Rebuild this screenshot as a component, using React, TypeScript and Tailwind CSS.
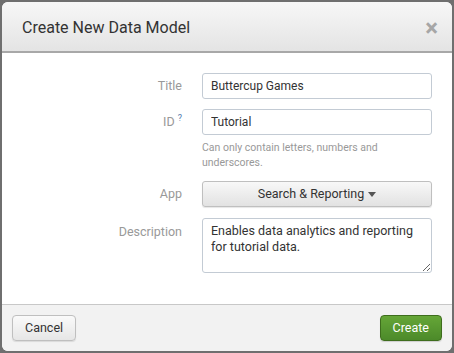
import React from 'react';

const labelClasses = "w-[200px] shrink-0 pr-[20px] text-right text-[12.5px] text-[#999]";
const inputClasses = "h-[26px] w-[230px] rounded-[3px] border border-[#c3cbd4] bg-white px-[8px] text-[12px] text-[#333] outline-none";

const App: React.FC = () => {
  return (
    <div className="h-[353px] w-[454px] bg-[#6f6f6f] p-[2px] font-['Roboto',sans-serif]">
      <div className="flex h-[349px] w-[450px] flex-col overflow-hidden rounded-[6px] bg-white">
        <div className="flex h-[51px] shrink-0 items-center justify-between border-b-2 border-[#a8a8a8] bg-gradient-to-b from-[#f7f7f7] to-[#e4e4e4] pl-[20px] pr-[14px] pt-[3px]">
          <h3 className="text-[16px] text-[#333]">Create New Data Model</h3>
          <span className="text-[24px] font-bold leading-none text-[#a6a6a6]">×</span>
        </div>

        <div className="flex-1 pt-[20px]">
          <div className="flex items-center">
            <label className={labelClasses}>Title</label>
            <input className={inputClasses} defaultValue="Buttercup Games" />
          </div>
          <div className="mt-[10px] flex items-center">
            <label className={labelClasses}>
              ID <sup className="text-[9px] text-[#5379af]">?</sup>
            </label>
            <input className={inputClasses} defaultValue="Tutorial" />
          </div>
          <p className="ml-[200px] mt-[5px] w-[200px] text-[10.5px] leading-[15px] text-[#999]">
            Can only contain letters, numbers and underscores.
          </p>
          <div className="mt-[11px] flex items-center">
            <label className={labelClasses}>App</label>
            <button className="flex h-[26px] w-[230px] items-center justify-center gap-1 rounded-[3px] border border-[#bfbfbf] bg-gradient-to-b from-[#f8f8f8] to-[#e2e2e2] text-[12.5px] text-[#333] shadow-[0_1px_1px_rgba(0,0,0,0.1)]">
              Search &amp; Reporting
              <svg width="8" height="5" viewBox="0 0 8 5"><path d="M0 0h8L4 5z" fill="#555" /></svg>
            </button>
          </div>
          <div className="mt-[11px] flex items-start">
            <label className={`${labelClasses} pt-[5px]`}>Description</label>
            <textarea
              className="h-[55px] w-[230px] resize rounded-[3px] border border-[#c3cbd4] bg-white py-[4px] pl-[8px] pr-[16px] text-[12.5px] leading-[16px] text-[#333] outline-none"
              defaultValue="Enables data analytics and reporting for tutorial data."
            />
          </div>
        </div>

        <div className="flex h-[47px] shrink-0 items-center justify-between border-t border-[#c8c8c8] bg-[#f2f2f2] px-[10px]">
          <button className="h-[26px] rounded-[4px] border border-[#bfbfbf] bg-gradient-to-b from-[#fafafa] to-[#e6e6e6] px-[12px] text-[12.5px] text-[#333] shadow-[0_1px_1px_rgba(0,0,0,0.1)]">
            Cancel
          </button>
          <button className="h-[26px] rounded-[4px] border border-[#3e6d1d] bg-gradient-to-b from-[#65a637] to-[#4c8a2a] px-[12px] text-[12.5px] text-white shadow-[0_1px_1px_rgba(0,0,0,0.15)]">
            Create
          </button>
        </div>
      </div>
    </div>
  );
};

export default App;
